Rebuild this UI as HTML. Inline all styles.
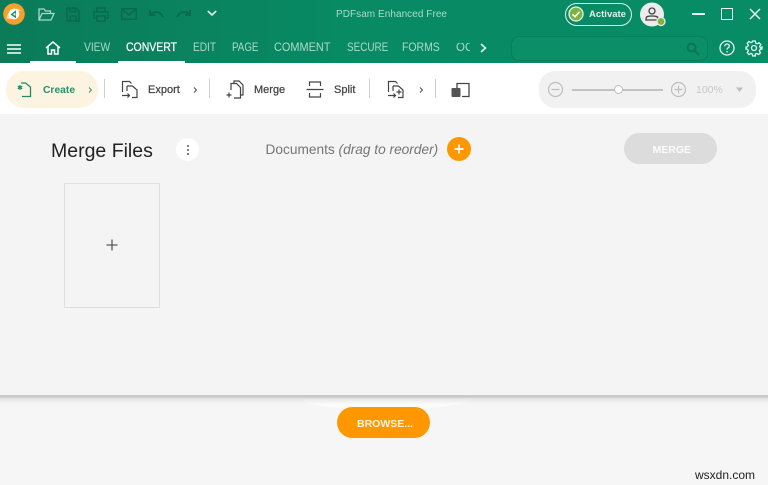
<!DOCTYPE html>
<html><head><meta charset="utf-8">
<style>
html,body{margin:0;padding:0;width:768px;height:485px;overflow:hidden;background:#f6f6f6;font-family:"Liberation Sans",sans-serif}
.t{position:absolute;white-space:nowrap;line-height:1}
svg{position:absolute;overflow:visible}
.tab{font-size:11.5px;color:#a9dcc8;top:43px;transform-origin:0 50%}
.tb{font-size:11px;color:#444;top:85px;font-weight:400;-webkit-text-stroke:.25px #444}
.sep{position:absolute;top:79px;width:1px;height:19px;background:#cfcfcf}
</style></head>
<body>
<div style="position:absolute;left:0;top:0;width:768px;height:63px;background:linear-gradient(90deg,#0b7b58 0%,#088a63 45%,#078c66 100%)"></div>
<div style="position:absolute;left:0;top:63px;width:768px;height:51px;background:#fff"></div>
<div style="position:absolute;left:0;top:114px;width:768px;height:282px;background:#f4f4f4"></div>
<div style="position:absolute;left:300px;top:398px;width:170px;height:12px;background:#fbfbfb;border-radius:0 0 85px 85px/0 0 12px 12px"></div>
<div style="position:absolute;left:0;top:395px;width:768px;height:9px;background:linear-gradient(#c9c9c9 0,#c9c9c9 20%,#e8e8e8 45%,rgba(246,246,246,0) 100%)"></div>

<!-- logo -->
<svg style="left:3px;top:3px" width="22" height="22" viewBox="0 0 22 22"><circle cx="11" cy="11" r="10.800" fill="#f5a02a"/><path d="M3.500 15.500C5 6 13 3 18.500 8c-2.500-.5-4.500 0-6 1.500 1.500 4-1.500 8-9 6z" fill="#fbe3b8" opacity=".9"/><circle cx="11" cy="11" r="5.300" fill="#fff"/><path d="M7.500 11.500L13 7.300v8z" fill="#1b8a68"/><path d="M10 11.300l2.300-1.700v3.400z" fill="#fff"/></svg>
<!-- QAT -->
<svg style="left:38px;top:8px" width="17" height="13" fill="none" stroke="#a9d9c6" stroke-width="1.300"><path d="M1 12V1h5l1.500 2h5v2.500M1 12l3-6.500h12l-3 6.500z"/></svg>
<svg style="left:66px;top:7px" width="14" height="15" fill="none" stroke="#0a6a4b" stroke-width="1.500"><path d="M1 1h9l3 3v10H1zM4 1v4h5V1M4 14V9h6v5"/></svg>
<svg style="left:93px;top:7px" width="16" height="15" fill="none" stroke="#0a6a4b" stroke-width="1.500"><path d="M4 5V1h8v4M4 11H1V5h14v6h-3M4 9h8v5H4z"/></svg>
<svg style="left:121px;top:8px" width="16" height="12" fill="none" stroke="#0a6a4b" stroke-width="1.500"><path d="M.7.700h14.600v10.600H.7zM.7 1l7.300 6 7.300-6"/></svg>
<svg style="left:148px;top:9px" width="16" height="10" fill="none" stroke="#0a6a4b" stroke-width="1.900"><path d="M15 8C12 2 7 2 2.500 5M2 1v5h5"/></svg>
<svg style="left:176px;top:9px" width="16" height="10" fill="none" stroke="#0a6a4b" stroke-width="1.900"><path d="M1 8c3-6 8-6 12.500-3M14 1v5H9"/></svg>
<svg style="left:207px;top:10px" width="10" height="7" fill="none" stroke="#d8efe6" stroke-width="1.700"><path d="M.8 1l4.200 4 4.200-4"/></svg>
<div class="t" style="left:336px;top:9.500px;font-size:10px;color:#a9dcc8;letter-spacing:.05px">PDFsam Enhanced Free</div>

<!-- activate -->
<div style="position:absolute;left:565px;top:3px;width:65px;height:21px;border:1.500px solid #e6f3ee;border-radius:13px"></div>
<svg style="left:568px;top:6px" width="16" height="16"><circle cx="8" cy="8" r="7" fill="#7cb342" stroke="#e6f3ee" stroke-width="1.300"/><path d="M4.500 8.300l2.500 2.500 4.500-5" fill="none" stroke="#fff" stroke-width="1.500"/></svg>
<div class="t" style="left:589px;top:10px;font-size:9.500px;font-weight:700;color:#dff1ea">Activate</div>
<!-- user -->
<svg style="left:639px;top:2px" width="28" height="26"><circle cx="13" cy="12.500" r="12" fill="#ececec"/><circle cx="13" cy="9" r="3" fill="none" stroke="#444" stroke-width="1.300"/><path d="M7 18v-1.500c0-2 2-2.500 6-2.500s6 .5 6 2.500V18z" fill="none" stroke="#444" stroke-width="1.300"/><circle cx="22" cy="19.500" r="4" fill="#7cb342" stroke="#ececec" stroke-width="1.300"/></svg>
<!-- window controls -->
<div style="position:absolute;left:692px;top:13px;width:13px;height:2px;background:#e8f5f0"></div>
<div style="position:absolute;left:721px;top:8px;width:10px;height:10px;border:1.500px solid #e8f5f0"></div>
<svg style="left:749px;top:8px" width="12" height="12" stroke="#e8f5f0" stroke-width="1.500"><path d="M1 1l10 10M11 1L1 11"/></svg>

<!-- tabs -->
<div style="position:absolute;left:7px;top:44px;width:14px;height:1.500px;background:#b8e2d2;box-shadow:0 4px 0 #b8e2d2,0 8px 0 #b8e2d2"></div>
<div style="position:absolute;left:30px;top:61px;width:46px;height:2px;background:#fff"></div>
<svg style="left:45px;top:41px" width="16" height="14" fill="none" stroke="#fff" stroke-width="1.500"><path d="M1 7l7-6 7 6M3 6v7h3.500V9h3v4H13V6"/></svg>
<div class="t tab" style="left:83.500px;transform:scaleX(.89)">VIEW</div>
<div class="t tab" style="left:126px;color:#fff;transform:scaleX(.91);-webkit-text-stroke:.25px #fff">CONVERT</div>
<div style="position:absolute;left:118px;top:61px;width:67px;height:2px;background:#fff"></div>
<div class="t tab" style="left:193px;transform:scaleX(.88)">EDIT</div>
<div class="t tab" style="left:232px;transform:scaleX(.85)">PAGE</div>
<div class="t tab" style="left:274px;transform:scaleX(.95)">COMMENT</div>
<div class="t tab" style="left:346.500px;transform:scaleX(.86)">SECURE</div>
<div class="t tab" style="left:402px;transform:scaleX(.91)">FORMS</div>
<div class="t tab" style="left:456px;width:14px;overflow:hidden">OCR</div>
<svg style="left:480px;top:43px" width="7" height="10" fill="none" stroke="#e3f3ed" stroke-width="1.600"><path d="M1 1l4.500 4L1 9"/></svg>
<!-- search -->
<div style="position:absolute;left:511px;top:36px;width:195px;height:23px;background:#0a8f67;border:1px solid #0b7d5a;border-radius:8px"></div>
<svg style="left:686px;top:42px" width="14" height="14" fill="none" stroke="#0d7555" stroke-width="2"><circle cx="5.500" cy="5.500" r="4"/><path d="M8.500 8.500l4.500 4.500"/></svg>
<!-- help gear -->
<svg style="left:719px;top:40px" width="16" height="16" fill="none" stroke="#e8f5f0" stroke-width="1.300"><circle cx="8" cy="8" r="7"/><path d="M5.800 6.300c0-3 4.500-3 4.500-.2 0 1.700-2.300 1.700-2.300 3.500"/><path d="M8 11v1.500"/></svg>
<svg style="left:746px;top:40px" width="16" height="16" fill="none" stroke="#e8f5f0" stroke-width="1.300"><circle cx="8" cy="8" r="2.500"/><path d="M6.700 1h2.600l.4 2.100 1.500.7 1.800-1.100 1.800 1.900-1.100 1.700.6 1.600L16 7v2l-1.900.5-.7 1.500 1.100 1.800-1.900 1.800-1.700-1.100-1.600.6L9.300 16H6.700l-.4-1.900-1.500-.7-1.800 1.100-1.800-1.800 1.100-1.800-.7-1.500L0 9V7l1.600-.4.700-1.600-1.100-1.700L3 1.500l1.800 1.100 1.500-.6z"/></svg>

<!-- toolbar -->
<div style="position:absolute;left:6px;top:71px;width:92px;height:37px;background:#fdf3e1;border-radius:18px"></div>
<svg style="left:16px;top:81px" width="16" height="17" fill="none" stroke="#1f8a66" stroke-width="1.300"><path d="M5 2h4.500l5 4v9.500H6"/><path d="M4 4v5M1.800 5.200l4.400 2.600M6.200 5.200L1.800 7.800" stroke-width="1.200"/></svg>
<div class="t" style="left:43px;top:85.500px;font-size:10.300px;font-weight:700;color:#2a8f6c">Create</div>
<svg style="left:88px;top:86px" width="5" height="8" fill="none" stroke="#2a8f6c" stroke-width=".9"><path d="M1 1.500l2.500 2.500L1 6.500"/></svg>
<div class="sep" style="left:104px"></div>
<svg style="left:121px;top:80px" width="18" height="19" fill="none" stroke="#444" stroke-width="1.200"><path d="M1.500 12V1.500h7l2 2M6 6h5.500l4.500 4v7.500h-5M6 6v5M1 15.500h7.500M6.500 13.500l2 2-2 2"/></svg>
<div class="t tb" style="left:148px">Export</div>
<svg style="left:193px;top:86px" width="5" height="8" fill="none" stroke="#444" stroke-width=".9"><path d="M1 1.500l2.500 2.500L1 6.500"/></svg>
<div class="sep" style="left:209px"></div>
<svg style="left:226px;top:80px" width="18" height="19" fill="none" stroke="#444" stroke-width="1.200"><path d="M8 3.500V1h5l4 4v10h-2.500M5 10V3.500h5.500l4 4v10.500H8M3 12.500v5M.5 15h5"/></svg>
<div class="t tb" style="left:254px">Merge</div>
<svg style="left:306px;top:81px" width="18" height="17" fill="none" stroke="#444" stroke-width="1.200"><path d="M3.500 5V1h11v4M3.500 12v4h11v-4M.500 8.500h17"/></svg>
<div class="t tb" style="left:334px">Split</div>
<div class="sep" style="left:369px"></div>
<svg style="left:387px;top:80px" width="18" height="19" fill="none" stroke="#444" stroke-width="1.200"><path d="M1.500 12V1.500h7l2 2M6 6h5.500l4.500 4v7.500h-5M6 6v5M1 15.500h7.500M6.500 13.500l2 2-2 2M12 9.500v5M9.500 12h5"/></svg>
<svg style="left:419px;top:86px" width="5" height="8" fill="none" stroke="#444" stroke-width=".9"><path d="M1 1.500l2.500 2.500L1 6.500"/></svg>
<div class="sep" style="left:435px"></div>
<svg style="left:451px;top:82px" width="19" height="16"><path d="M6 6V1.500h12v13h-7" fill="none" stroke="#444" stroke-width="1.300"/><rect x=".5" y="6" width="9" height="9" rx="1" fill="#555"/></svg>

<!-- zoom -->
<div style="position:absolute;left:539px;top:71px;width:217px;height:37px;background:#f1f1f1;border-radius:16px"></div>
<svg style="left:547px;top:81px" width="17" height="17" fill="none" stroke="#bdbdbd" stroke-width="1.200"><circle cx="8.500" cy="8.500" r="7"/><path d="M4.500 8.500h8"/></svg>
<div style="position:absolute;left:572px;top:89px;width:91px;height:1.500px;background:#c2c2c2"></div>
<div style="position:absolute;left:614px;top:85px;width:7px;height:7px;border:1px solid #bdbdbd;border-radius:50%;background:#fff"></div>
<svg style="left:670px;top:81px" width="17" height="17" fill="none" stroke="#bdbdbd" stroke-width="1.200"><circle cx="8.500" cy="8.500" r="7"/><path d="M4.500 8.500h8M8.500 4.500v8"/></svg>
<div class="t" style="left:696px;top:85px;font-size:10.500px;color:#c8c8c8">100%</div>
<svg style="left:735px;top:87px" width="9" height="6"><path d="M1 .5h7L4.500 5z" fill="#bdbdbd"/></svg>

<!-- content -->
<div class="t" style="left:51px;top:141.500px;font-size:19.500px;color:#222">Merge Files</div>
<div style="position:absolute;left:176px;top:138px;width:23px;height:23px;border-radius:50%;background:#fff"></div>
<div style="position:absolute;left:187px;top:144.500px;width:2px;height:2px;border-radius:50%;background:#555;box-shadow:0 4px 0 #555,0 8px 0 #555"></div>
<div class="t" style="left:265.500px;top:143px;font-size:13.700px;color:#757575">Documents <i>(drag to reorder)</i></div>
<div style="position:absolute;left:447px;top:137px;width:24px;height:24px;border-radius:50%;background:#ff9800"></div>
<svg style="left:453px;top:143px" width="12" height="12" stroke="#fff" stroke-width="1.700"><path d="M1.500 6h9M6 1.500v9"/></svg>
<div style="position:absolute;left:624px;top:133px;width:93px;height:31px;border-radius:15.500px;background:#dcdcdc"></div>
<div class="t" style="left:652.500px;top:144.500px;font-size:10.500px;font-weight:700;color:#fbfbfb">MERGE</div>
<div style="position:absolute;left:64px;top:183px;width:96px;height:125px;border:1px solid #dedede;box-sizing:border-box"></div>
<svg style="left:106px;top:239px" width="12" height="12" stroke="#5a5a5a" stroke-width="1.300"><path d="M.5 6h11M6 .5v11"/></svg>

<div style="position:absolute;left:337px;top:407px;width:93px;height:31px;border-radius:15.500px;background:#ff9800"></div>
<div class="t" style="left:357px;top:418.500px;font-size:10.500px;font-weight:700;color:#fff3dd">BROWSE...</div>
<div class="t" style="left:695px;top:469px;font-size:12px;color:#222">wsxdn.com</div>
</body></html>
